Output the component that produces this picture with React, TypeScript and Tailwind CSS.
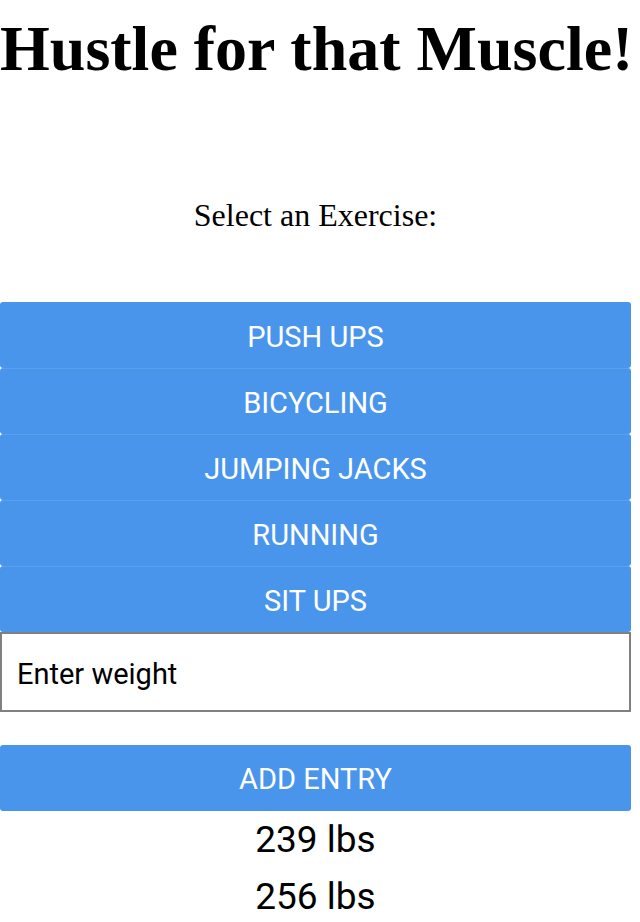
import React from "react";

const exercises = ["PUSH UPS", "BICYCLING", "JUMPING JACKS", "RUNNING", "SIT UPS"];

export default function App() {
  return (
    <div className="w-[631px] bg-white text-black">
      <h1 className="text-center font-bold text-[64px] leading-[77px] whitespace-nowrap pt-[10px]" style={{ fontFamily: '"Liberation Serif", serif' }}>
        Hustle for that Muscle!
      </h1>
      <p className="text-center text-[32px] leading-[38px] mt-[109px]" style={{ fontFamily: '"Liberation Serif", serif' }}>
        Select an Exercise:
      </p>
      <div className="mt-[68px] flex flex-col" style={{ fontFamily: 'Roboto, "Liberation Sans", sans-serif' }}>
        {exercises.map((e, i) => (
          <button
            key={e}
            className={`h-[66px] w-full bg-[#4a95ec] text-white text-[29px] rounded-[3px] pt-[5px] ${i > 0 ? "border-t border-[#5aa0ee]" : ""}`}
          >
            {e}
          </button>
        ))}
        <input
          placeholder="Enter weight"
          className="h-[80px] w-full border-2 border-[#808080] px-[15px] pt-[3px] text-[29px] placeholder:text-black outline-none"
        />
        <button className="mt-[33px] h-[66px] w-full bg-[#4a95ec] text-white text-[29px] rounded-[3px] pt-[3px]">
          ADD ENTRY
        </button>
        <div className="text-center text-[37px] leading-[57px]">239 lbs</div>
        <div className="text-center text-[37px] leading-[57px]">256 lbs</div>
      </div>
    </div>
  );
}
